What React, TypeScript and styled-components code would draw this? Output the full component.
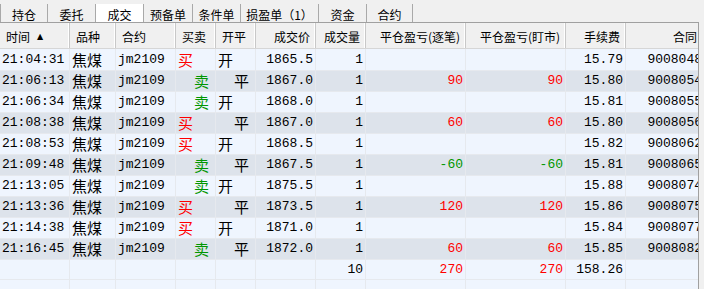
import React from "react";
import styled, { createGlobalStyle } from "styled-components";

const Global = createGlobalStyle`
  html, body { margin: 0; padding: 0; background: #f0f0f0; overflow: hidden; }
  body { width: 704px; height: 289px; }
`;

const COLS = "70px 46px 60px 40px 40px 60px 50px 100px 100px 60px 79px";

const Page = styled.div`
  width: 704px;
  height: 289px;
  background: #f0f0f0;
  display: flex;
  flex-direction: column;
  overflow: hidden;
`;

const TabBar = styled.div`
  display: flex;
  height: 22px;
  flex: none;
  align-items: flex-end;
`;

const Tab = styled.div<{ $w: number; $active?: boolean; $first?: boolean }>`
  box-sizing: border-box;
  width: ${(p) => p.$w}px;
  height: 18px;
  padding-top: 2px;
  display: flex;
  align-items: center;
  justify-content: center;
  font-family: "Noto Sans CJK SC", sans-serif;
  font-size: 12px;
  color: #000;
  background: ${(p) => (p.$active ? "#ffffff" : "transparent")};
  border-right: 1px solid #a9a9a9;
  border-left: ${(p) => (p.$first ? "1px solid #a9a9a9" : "none")};
`;

const Table = styled.div`
  box-sizing: border-box;
  width: 699px;
  border-top: 1px solid #a0a0a0;
  border-right: 1px solid #a0a0a0;
  overflow: hidden;
  flex: 1;
`;

const HeaderRow = styled.div`
  display: grid;
  grid-template-columns: ${COLS};
  height: 25px;
  background: #f0f0f0;
  border-bottom: 1px solid #d6d6d6;
`;

const HeadCell = styled.div<{ $right?: boolean; $pad?: number }>`
  box-sizing: border-box;
  display: flex;
  align-items: center;
  justify-content: ${(p) => (p.$right ? "flex-end" : "flex-start")};
  padding: 1px ${(p) => (p.$right ? `${p.$pad ?? 5}px` : "0")} 0 ${(p) => (p.$right ? "0" : "6px")};
  font-family: "Noto Sans CJK SC", sans-serif;
  font-size: 12px;
  color: #000;
  white-space: nowrap;
  border-right: 1px solid #c8c8c8;
  box-shadow: inset -2px 0 0 -1px #ffffff;
`;

const SortMark = styled.span`
  font-size: 8px;
  margin-left: 7px;
  font-family: "DejaVu Sans", sans-serif;
`;

const Row = styled.div<{ $alt?: boolean }>`
  display: grid;
  grid-template-columns: ${COLS};
  height: 21px;
  background: ${(p) => (p.$alt ? "#dde3eb" : "#eff5fe")};
`;

const Cell = styled.div<{ $right?: boolean; $indent?: boolean; $color?: string }>`
  box-sizing: border-box;
  display: flex;
  align-items: center;
  justify-content: ${(p) => (p.$right ? "flex-end" : "flex-start")};
  padding: 0 ${(p) => (p.$right ? "2px" : "0")} 0
    ${(p) => (p.$right ? "0" : p.$indent ? "18px" : "2px")};
  font-family: "Liberation Mono", "Noto Sans CJK SC", monospace;
  font-size: 13px;
  color: ${(p) => p.$color || "#000"};
  white-space: nowrap;
  overflow: visible;
  border-right: 1px solid #e6e9ee;
  border-bottom: 1px solid #e6e9ee;
`;

const Han = styled.span`
  font-family: "Noto Sans CJK SC", sans-serif;
  font-size: 15px;
`;

const RED = "#ff0000";
const GREEN = "#009600";

type Trade = [string, string, string, string, string, string, string, string, string, string, string];

const trades: Trade[] = [
  ["21:04:31", "焦煤", "jm2109", "买", "开", "1865.5", "1", "", "", "15.79", "9008048"],
  ["21:06:13", "焦煤", "jm2109", "卖", "平", "1867.0", "1", "90", "90", "15.80", "9008054"],
  ["21:06:34", "焦煤", "jm2109", "卖", "开", "1868.0", "1", "", "", "15.81", "9008055"],
  ["21:08:38", "焦煤", "jm2109", "买", "平", "1867.0", "1", "60", "60", "15.80", "9008056"],
  ["21:08:53", "焦煤", "jm2109", "买", "开", "1868.5", "1", "", "", "15.82", "9008062"],
  ["21:09:48", "焦煤", "jm2109", "卖", "平", "1867.5", "1", "-60", "-60", "15.81", "9008065"],
  ["21:13:05", "焦煤", "jm2109", "卖", "开", "1875.5", "1", "", "", "15.88", "9008074"],
  ["21:13:36", "焦煤", "jm2109", "买", "平", "1873.5", "1", "120", "120", "15.86", "9008075"],
  ["21:14:38", "焦煤", "jm2109", "买", "开", "1871.0", "1", "", "", "15.84", "9008077"],
  ["21:16:45", "焦煤", "jm2109", "卖", "平", "1872.0", "1", "60", "60", "15.85", "9008082"],
];

const tabs: { label: string; w: number; active?: boolean }[] = [
  { label: "持仓", w: 48 },
  { label: "委托", w: 48 },
  { label: "成交", w: 48, active: true },
  { label: "预备单", w: 49 },
  { label: "条件单", w: 48 },
  { label: "损盈单（1）", w: 78 },
  { label: "资金", w: 48 },
  { label: "合约", w: 46 },
];

const headers: { label: string; right?: boolean; sort?: boolean; pad?: number }[] = [
  { label: "时间", sort: true },
  { label: "品种" },
  { label: "合约" },
  { label: "买卖" },
  { label: "开平" },
  { label: "成交价", right: true },
  { label: "成交量", right: true },
  { label: "平仓盈亏(逐笔)", right: true },
  { label: "平仓盈亏(盯市)", right: true },
  { label: "手续费", right: true },
  { label: "合同", right: true, pad: 7 },
];

const pnlColor = (v: string) => (v.startsWith("-") ? GREEN : RED);

export default function App() {
  return (
    <Page>
      <Global />
      <TabBar>
        {tabs.map((t, i) => (
          <Tab key={t.label} $w={t.w} $active={t.active} $first={i === 0}>
            {t.label}
          </Tab>
        ))}
      </TabBar>
      <Table>
        <HeaderRow>
          {headers.map((h) => (
            <HeadCell key={h.label} $right={h.right} $pad={h.pad}>
              {h.label}
              {h.sort && <SortMark>▲</SortMark>}
            </HeadCell>
          ))}
        </HeaderRow>
        {trades.map((r, i) => {
          const buy = r[3] === "买";
          const open = r[4] === "开";
          return (
            <Row key={r[0]} $alt={i % 2 === 1}>
              <Cell>{r[0]}</Cell>
              <Cell>
                <Han>{r[1]}</Han>
              </Cell>
              <Cell>{r[2]}</Cell>
              <Cell $indent={!buy} $color={buy ? RED : GREEN}>
                <Han>{r[3]}</Han>
              </Cell>
              <Cell $indent={!open}>
                <Han>{r[4]}</Han>
              </Cell>
              <Cell $right>{r[5]}</Cell>
              <Cell $right>{r[6]}</Cell>
              <Cell $right $color={pnlColor(r[7])}>{r[7]}</Cell>
              <Cell $right $color={pnlColor(r[8])}>{r[8]}</Cell>
              <Cell $right>{r[9]}</Cell>
              <Cell $right>{r[10]}</Cell>
            </Row>
          );
        })}
        <Row>
          <Cell />
          <Cell />
          <Cell />
          <Cell />
          <Cell />
          <Cell />
          <Cell $right>10</Cell>
          <Cell $right $color={RED}>270</Cell>
          <Cell $right $color={RED}>270</Cell>
          <Cell $right>158.26</Cell>
          <Cell />
        </Row>
        <Row>
          {headers.map((h) => (
            <Cell key={h.label} />
          ))}
        </Row>
      </Table>
    </Page>
  );
}
